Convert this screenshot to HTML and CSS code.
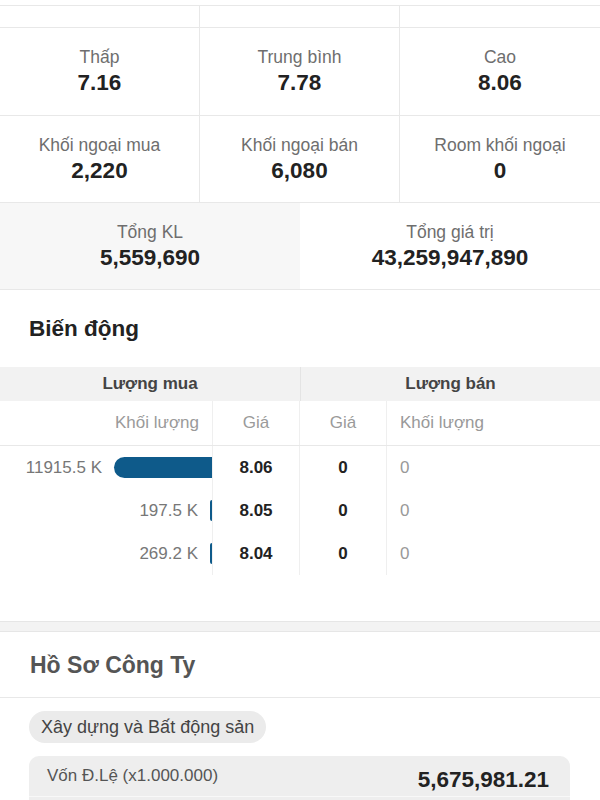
FILE: index.html
```html
<!DOCTYPE html>
<html lang="vi">
<head>
    <meta charset="UTF-8">
    <meta name="viewport" content="width=device-width, initial-scale=1.0">
    <title>Chi tiết cổ phiếu</title>
    <link rel="stylesheet" href="styles.css">
</head>
<body>
    <div class="stats">
        <div class="cell cell-top"></div>
        <div class="cell cell-top"></div>
        <div class="cell cell-top"></div>

        <div class="cell"><span class="label">Thấp</span><span class="value">7.16</span></div>
        <div class="cell"><span class="label">Trung bình</span><span class="value">7.78</span></div>
        <div class="cell"><span class="label">Cao</span><span class="value">8.06</span></div>

        <div class="cell cell-last"><span class="label">Khối ngoại mua</span><span class="value">2,220</span></div>
        <div class="cell cell-last"><span class="label">Khối ngoại bán</span><span class="value">6,080</span></div>
        <div class="cell cell-last"><span class="label">Room khối ngoại</span><span class="value">0</span></div>
    </div>

    <div class="totals">
        <div class="total total-shaded"><span class="label">Tổng KL</span><span class="value">5,559,690</span></div>
        <div class="total"><span class="label">Tổng giá trị</span><span class="value">43,259,947,890</span></div>
    </div>

    <section class="movement">
        <h2 class="section-title">Biến động</h2>

        <div class="book">
            <div class="book-head">
                <div class="head-cell">Lượng mua</div>
                <div class="head-cell">Lượng bán</div>
            </div>

            <div class="book-row book-sub">
                <div class="col col-buy-vol">Khối lượng</div>
                <div class="col col-price">Giá</div>
                <div class="col col-price">Giá</div>
                <div class="col col-sell-vol">Khối lượng</div>
            </div>

            <div class="book-row">
                <div class="col col-buy-vol"><span>11915.5 K</span><span class="bar" style="width: 98px"></span></div>
                <div class="col col-price strong">8.06</div>
                <div class="col col-price strong">0</div>
                <div class="col col-sell-vol">0</div>
            </div>
            <div class="book-row">
                <div class="col col-buy-vol"><span>197.5 K</span><span class="bar" style="width: 2px"></span></div>
                <div class="col col-price strong">8.05</div>
                <div class="col col-price strong">0</div>
                <div class="col col-sell-vol">0</div>
            </div>
            <div class="book-row">
                <div class="col col-buy-vol"><span>269.2 K</span><span class="bar" style="width: 2px"></span></div>
                <div class="col col-price strong">8.04</div>
                <div class="col col-price strong">0</div>
                <div class="col col-sell-vol">0</div>
            </div>
        </div>
    </section>

    <div class="band"></div>

    <section class="profile">
        <h2 class="profile-title">Hồ Sơ Công Ty</h2>
        <div class="profile-body">
            <span class="tag">Xây dựng và Bất động sản</span>
            <div class="info-box">
                <div class="info-row">
                    <span class="info-label">Vốn Đ.Lệ (x1.000.000)</span>
                    <span class="info-value">5,675,981.21</span>
                </div>
                <div class="info-row"></div>
            </div>
        </div>
    </section>
</body>
</html>
```

FILE: styles.css
```css
body {
    margin: 0;
    padding-top: 5px;
    font-family: "Liberation Sans", Arial, sans-serif;
    color: #222;
    background-color: #fff;
}

/* thống kê phiên */

.stats {
    display: grid;
    grid-template-columns: repeat(3, 1fr);
    border-top: 1px solid #e8e8e8;
}

.cell {
    box-sizing: border-box;
    display: flex;
    flex-direction: column;
    align-items: center;
    justify-content: center;
    gap: 3px;
    height: 88px;
    border-bottom: 1px solid #e8e8e8;
    border-right: 1px solid #e8e8e8;
}

.cell:nth-child(3n) {
    border-right: none;
}

.cell-top {
    height: 22px;
}

.cell-last {
    height: 87px;
}

.label {
    font-size: 17.5px;
    line-height: 20px;
    color: #6e6e6e;
}

.value {
    font-size: 22.5px;
    line-height: 26px;
    font-weight: bold;
    color: #222;
}

.totals {
    display: grid;
    grid-template-columns: 1fr 1fr;
    border-bottom: 1px solid #e8e8e8;
}

.total {
    display: flex;
    flex-direction: column;
    align-items: center;
    justify-content: center;
    gap: 3px;
    height: 86px;
}

.total-shaded {
    background-color: #f7f7f7;
}

/* biến động */

.section-title {
    margin: 0;
    padding: 26px 29px 25px;
    font-size: 22.5px;
    line-height: 26px;
    font-weight: bold;
    color: #222;
}

.book {
    margin-bottom: 46px;
}

.book-head {
    display: grid;
    grid-template-columns: 300px 1fr;
    background-color: #f2f2f2;
}

.head-cell {
    height: 34px;
    line-height: 34px;
    text-align: center;
    font-size: 17px;
    font-weight: bold;
    color: #444;
}

.head-cell + .head-cell {
    border-left: 1px solid #e4e4e4;
}

.book-row {
    display: grid;
    grid-template-columns: 212px 87px 87px 1fr;
    height: 43px;
}

.book-sub {
    height: 44px;
    border-bottom: 1px solid #e8e8e8;
    color: #9a9a9a;
}

.col {
    display: flex;
    align-items: center;
    font-size: 17px;
}

.col + .col {
    border-left: 1px solid #efefef;
}

.col-buy-vol {
    justify-content: flex-end;
    gap: 12px;
    padding-right: 13px;
    color: #777;
}

.book-sub .col-buy-vol {
    color: #9a9a9a;
}

.book-row:not(.book-sub) .col-buy-vol {
    padding-right: 0;
}

.col-price {
    justify-content: center;
}

.col-sell-vol {
    padding-left: 13px;
    color: #999;
}

.strong {
    font-weight: bold;
    color: #222;
}

.bar {
    display: block;
    height: 21px;
    background-color: #0e5a8a;
    border-radius: 11px 0 0 11px;
}

.band {
    height: 9px;
    background-color: #f3f3f3;
    border-top: 1px solid #e6e6e6;
    border-bottom: 1px solid #e6e6e6;
}

/* hồ sơ công ty */

.profile-title {
    margin: 0;
    padding: 19px 30px 18px;
    font-size: 23px;
    line-height: 28px;
    font-weight: bold;
    color: #555;
    border-bottom: 1px solid #e8e8e8;
}

.profile-body {
    display: flex;
    flex-direction: column;
    align-items: flex-start;
    padding: 13px 30px 0 29px;
}

.tag {
    height: 32px;
    line-height: 32px;
    padding: 0 12px;
    font-size: 18px;
    color: #444;
    background-color: #ebebeb;
    border-radius: 16px;
}

.info-box {
    align-self: stretch;
    margin-top: 13px;
    background-color: #eeeeee;
    border-radius: 10px;
}

.info-row {
    display: flex;
    justify-content: space-between;
    align-items: center;
    height: 40px;
    padding: 0 21px 0 18px;
    border-bottom: 1px solid #f8f8f8;
}

.info-label {
    font-size: 17px;
    color: #555;
}

.info-value {
    padding-top: 7px;
    font-size: 22.5px;
    font-weight: bold;
    color: #222;
}
```
